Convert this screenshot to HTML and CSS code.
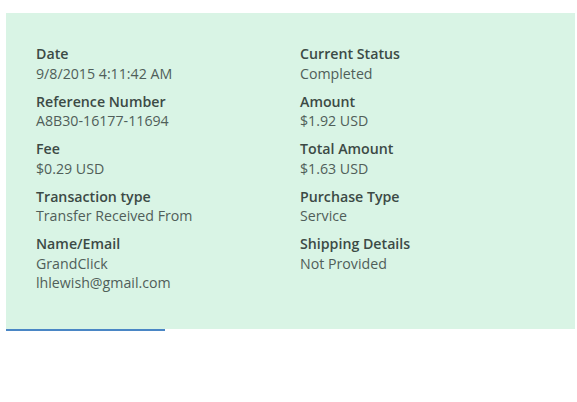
FILE: index.html
```html
<!DOCTYPE html>
<html>
<head>
<meta charset="utf-8">
<link rel="stylesheet" href="styles.css">
</head>
<body>
<div class="wrap">
  <div class="panel">
    <div class="col">
      <div class="item"><div class="label">Date</div><div class="value">9/8/2015 4:11:42 AM</div></div>
      <div class="item"><div class="label">Reference Number</div><div class="value">A8B30-16177-11694</div></div>
      <div class="item"><div class="label">Fee</div><div class="value">$0.29 USD</div></div>
      <div class="item"><div class="label">Transaction type</div><div class="value">Transfer Received From</div></div>
      <div class="item"><div class="label">Name/Email</div><div class="value">GrandClick</div><div class="value">lhlewish@gmail.com</div></div>
    </div>
    <div class="col">
      <div class="item"><div class="label">Current Status</div><div class="value">Completed</div></div>
      <div class="item"><div class="label">Amount</div><div class="value">$1.92 USD</div></div>
      <div class="item"><div class="label">Total Amount</div><div class="value">$1.63 USD</div></div>
      <div class="item"><div class="label">Purchase Type</div><div class="value">Service</div></div>
      <div class="item"><div class="label">Shipping Details</div><div class="value">Not Provided</div></div>
    </div>
  </div>
  <div class="underline"></div>
</div>
</body>
</html>
```

FILE: styles.css
```css
html, body {
  margin: 0;
  padding: 0;
  background: #ffffff;
}
body {
  font-family: "Open Sans", "Noto Sans", sans-serif;
  font-size: 14.2px;
}
.wrap {
  padding: 13px 2px 0 6px;
}
.panel {
  background: #d9f4e5;
  display: grid;
  grid-template-columns: 264px 1fr;
  padding: 31px 0 26px 30px;
  height: 316px;
  box-sizing: border-box;
}
.item {
  margin-bottom: 8.5px;
}
.label {
  color: #3c4a45;
  font-weight: 600;
  line-height: 19.5px;
}
.value {
  color: #505e59;
  line-height: 19.5px;
}
.underline {
  width: 159px;
  height: 2px;
  background: #4a86c5;
}
```
